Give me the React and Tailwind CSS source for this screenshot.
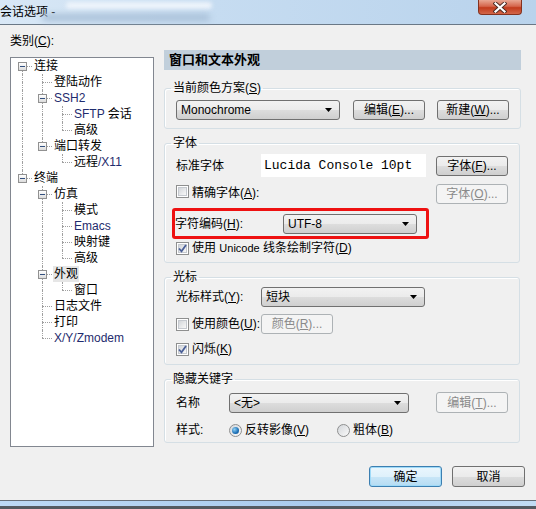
import React from "react";

const dot = "border-dotted border-[#a0a0a0]";

const tree = [
  {
    label: "连接",
    children: [
      { label: "登陆动作" },
      {
        label: "SSH2",
        en: true,
        children: [{ label: "SFTP", tail: " 会话", en: true }, { label: "高级" }],
      },
      { label: "端口转发", children: [{ label: "远程", tail: "/X11", enTail: true }] },
    ],
  },
  {
    label: "终端",
    children: [
      {
        label: "仿真",
        children: [
          { label: "模式" },
          { label: "Emacs", en: true },
          { label: "映射键" },
          { label: "高级" },
        ],
      },
      { label: "外观", selected: true, children: [{ label: "窗口" }] },
      { label: "日志文件" },
      { label: "打印" },
      { label: "X/Y/Zmodem", en: true },
    ],
  },
];

function flatten(nodes, depth, anc, out) {
  nodes.forEach((n, i) => {
    const hasNext = i < nodes.length - 1;
    const first = depth === 0 && i === 0;
    out.push({ ...n, depth, anc, hasNext, first });
    if (n.children) flatten(n.children, depth + 1, [...anc, hasNext], out);
  });
  return out;
}

function Box() {
  return (
    <div className="absolute left-[6px] top-[4px] w-[9px] h-[9px] border border-[#919191] bg-[linear-gradient(#ffffff,#dcdcdc)] flex items-center justify-center">
      <div className="w-[5px] h-[1px] bg-[#33507f]" />
    </div>
  );
}

function Cell({ up, down, right, box }) {
  return (
    <div className="relative w-[20px] h-[16px] shrink-0 flex flex-col">
      <div className={up ? `h-[8px] ml-[10px] border-l ${dot}` : "h-[8px] ml-[10px]"} />
      <div
        className={
          (down ? `border-l ${dot} ` : "") +
          (right ? `border-t ${dot} ` : "") +
          "h-[8px] ml-[10px]"
        }
      />
      {box && <Box />}
    </div>
  );
}

function TreeRow({ node }) {
  const cells = node.anc.map((cont, i) => <Cell key={i} up={cont} down={cont} />);
  return (
    <div className="flex h-[16px] items-center">
      {cells}
      <Cell up={!node.first} down={node.hasNext} right box={!!node.children} />
      <span
        className={
          (node.selected ? "bg-[#e6e6e6] " : "") +
          (node.en ? "text-[#1f2c6e] " : "text-black ") +
          "ml-[1px] px-[1px] leading-[16px] text-[12px] whitespace-nowrap"
        }
      >
        {node.label}
        {node.tail && (
          <span className={node.enTail ? "text-[#1f2c6e]" : "text-black"}>{node.tail}</span>
        )}
      </span>
    </div>
  );
}

function Arrow() {
  return (
    <svg width="7" height="4" viewBox="0 0 7 4" className="shrink-0">
      <path d="M0 0h7L3.5 4z" fill="#000" />
    </svg>
  );
}

function Combo({ value, className }) {
  return (
    <div
      className={
        "flex items-center h-[20px] border border-[#707070] rounded-[3px] bg-[linear-gradient(#f2f2f2,#ebebeb_50%,#dddddd_50%,#cfcfcf)] pl-[4px] pr-[7px] " +
        className
      }
    >
      <span className="flex-1 text-[12px] leading-[16px] whitespace-nowrap">{value}</span>
      <Arrow />
    </div>
  );
}

function Btn({ children, disabled, className }) {
  return (
    <div
      className={
        (disabled
          ? "border-[#adb2b5] bg-[#f4f4f4] text-[#8a8a8a] "
          : "border-[#707070] bg-[linear-gradient(#f2f2f2,#ebebeb_50%,#dddddd_50%,#cfcfcf)] text-black ") +
        "flex items-center justify-center w-[72px] h-[20px] border rounded-[3px] text-[12px] leading-[16px] whitespace-nowrap shrink-0 " +
        className
      }
    >
      {children}
    </div>
  );
}

function Check({ checked }) {
  return (
    <div className="relative w-[13px] h-[13px] border border-[#8e8f8f] bg-white p-[1px] shrink-0">
      <div className="w-full h-full border border-[#c5c9cf] bg-[linear-gradient(135deg,#d3d6da,#f8f8f8)]" />
      {checked && (
        <svg width="11" height="11" viewBox="0 0 11 11" className="absolute left-[0px] top-[0px]">
          <path d="M2 5.5l2.5 2.8L9 2" stroke="#4a5f97" strokeWidth="1.8" fill="none" />
        </svg>
      )}
    </div>
  );
}

function Radio({ checked }) {
  return (
    <div className="w-[13px] h-[13px] rounded-full border border-[#8e8f8f] bg-[linear-gradient(135deg,#d3d6da,#fafafa)] flex items-center justify-center shrink-0">
      {checked && (
        <div className="w-[7px] h-[7px] rounded-full bg-[radial-gradient(circle_at_35%_35%,#8fd0f5,#1c6fb5_60%,#124f8a)]" />
      )}
    </div>
  );
}

function Group({ title, className, children }) {
  return (
    <fieldset
      className={
        "border border-[#d5dfe5] rounded-[3px] px-[11px] shadow-[inset_1px_1px_0_#ffffff] " + className
      }
    >
      <legend className="ml-[-5px] px-[2px] text-[12px] leading-[16px]">{title}</legend>
      {children}
    </fieldset>
  );
}

export default function App() {
  const rows = flatten(tree, 0, [], []);
  return (
    <div className="w-[536px] h-[509px] flex flex-col overflow-hidden bg-[#f0f0f0] text-black font-['Liberation_Sans','Noto_Sans_CJK_SC',sans-serif]">
      {/* title bar */}
      <div className="relative h-[25px] shrink-0 border-b border-[#6a7886] bg-[linear-gradient(90deg,#d9e8f6,#c6dcf1_40%,#b9d3ec)] flex items-center">
        <span className="text-[12px] leading-[16px] pl-[0px] whitespace-nowrap">会话选项 -</span>
        <div className="absolute left-[66px] top-[2px] w-[146px] h-[7px] rounded-full bg-[#eef4fb] blur-[2px]" />
        <div className="absolute left-[42px] top-[14px] w-[168px] h-[7px] rounded-full bg-[#a9c0d8] blur-[3px]" />
        <div className="absolute left-[478px] top-[0px] w-[44px] h-[15px] rounded-b-[4px] border border-t-0 border-[#84321f] bg-[linear-gradient(#e9a793,#d5664c_45%,#c23b1c_55%,#d2674a)] flex items-center justify-center">
          <svg width="14" height="11" viewBox="0 0 14 11">
            <path d="M2.5 1.5l9 8M11.5 1.5l-9 8" stroke="#4a2a22" strokeWidth="4" strokeLinecap="square" />
            <path d="M2.5 1.5l9 8M11.5 1.5l-9 8" stroke="#ffffff" strokeWidth="2.2" strokeLinecap="square" />
          </svg>
        </div>
      </div>

      {/* body */}
      <div className="h-[475px] flex flex-col">
        <div className="flex">
          {/* left */}
          <div className="pl-[10px] pt-[8px] w-[164px] shrink-0">
            <div className="text-[12px] leading-[16px] h-[16px]">
              类别(<u>C</u>):
            </div>
            <div className="mt-[8px] w-[144px] h-[390px] border border-[#828790] bg-white pl-[1px] pt-[0px]">
              {rows.map((r, i) => (
                <TreeRow key={i} node={r} />
              ))}
            </div>
          </div>

          {/* right */}
          <div className="pt-[25px] w-[357px] flex flex-col">
            <div className="h-[20px] bg-[#c1cfdb] flex items-center pl-[5px] text-[13px] font-bold leading-[16px]">
              窗口和文本外观
            </div>

            <Group
              title={<>当前颜色方案(<u>S</u>)</>}
              className="mt-[10px] pt-[4px] pb-[8px] w-[356px]"
            >
              <div className="flex items-center gap-[12px]">
                <Combo value="Monochrome" className="w-[164px] mr-[1px]" />
                <Btn>
                  编辑(<u>E</u>)...
                </Btn>
                <Btn>
                  新建(<u>W</u>)...
                </Btn>
              </div>
            </Group>

            <Group title="字体" className="mt-[6px] pt-[3px] pb-[6px] w-[356px]">
              <div className="flex items-center h-[23px]">
                <span className="w-[85px] text-[12px] leading-[16px]">标准字体</span>
                <div className="w-[165px] h-[23px] bg-white flex items-center pl-[3px] text-[13px] font-['Liberation_Mono',monospace] whitespace-nowrap">
                  Lucida Console 10pt
                </div>
                <Btn className="ml-auto">
                  字体(<u>F</u>)...
                </Btn>
              </div>
              <div className="flex mt-[7px] h-[20px]">
                <div className="flex items-center gap-[3px] h-[14px]">
                  <Check />
                  <span className="text-[12px] leading-[16px] mt-[3px]">
                    精确字体(<u>A</u>):
                  </span>
                </div>
                <Btn disabled className="ml-auto">
                  字体(<u>O</u>)...
                </Btn>
              </div>
              <div className="ml-[-4px] mt-[4px] w-[257px] h-[31px] border-[3px] border-[#ee1111] rounded-[3px] flex items-center">
                <span className="w-[108px] shrink-0 text-[12px] leading-[16px]">
                  字符编码(<u>H</u>):
                </span>
                <Combo value="UTF-8" className="w-[134px]" />
              </div>
              <div className="flex items-center gap-[3px] h-[16px] mt-[1px]">
                <Check checked />
                <span className="text-[12px] leading-[16px] whitespace-nowrap">
                  使用 <span className="text-[11px]">Unicode</span> 线条绘制字符(<u>D</u>)
                </span>
              </div>
            </Group>

            <Group title="光标" className="mt-[6px] pt-[2px] pb-[7px] w-[356px]">
              <div className="flex items-center h-[20px]">
                <span className="w-[85px] text-[12px] leading-[16px]">
                  光标样式(<u>Y</u>):
                </span>
                <Combo value="短块" className="w-[164px]" />
              </div>
              <div className="flex items-center h-[20px] mt-[7px]">
                <div className="w-[85px] flex items-center gap-[3px]">
                  <Check />
                  <span className="text-[12px] leading-[16px] whitespace-nowrap">
                    使用颜色(<u>U</u>):
                  </span>
                </div>
                <Btn disabled>
                  颜色(<u>R</u>)...
                </Btn>
              </div>
              <div className="flex items-center gap-[3px] h-[16px] mt-[7px]">
                <Check checked />
                <span className="text-[12px] leading-[16px]">
                  闪烁(<u>K</u>)
                </span>
              </div>
            </Group>

            <Group title="隐藏关键字" className="mt-[6px] pt-[5px] pb-[4px] w-[356px]">
              <div className="flex items-center h-[21px]">
                <span className="w-[53px] text-[12px] leading-[16px]">名称</span>
                <Combo value="<无>" className="w-[180px]" />
                <Btn disabled className="ml-auto h-[21px]">
                  编辑(<u>T</u>)...
                </Btn>
              </div>
              <div className="flex items-center h-[16px] mt-[9px]">
                <span className="w-[53px] text-[12px] leading-[16px]">样式:</span>
                <div className="w-[108px] flex items-center gap-[3px]">
                  <Radio checked />
                  <span className="text-[12px] leading-[16px] whitespace-nowrap">
                    反转影像(<u>V</u>)
                  </span>
                </div>
                <div className="flex items-center gap-[3px]">
                  <Radio />
                  <span className="text-[12px] leading-[16px]">
                    粗体(<u>B</u>)
                  </span>
                </div>
              </div>
            </Group>
          </div>
        </div>

        {/* buttons */}
        <div className="flex justify-end gap-[10px] pr-[11px] mt-[19px]">
          <div className="w-[73px] h-[21px] rounded-[3px] border border-[#3c7fb1] shadow-[inset_0_0_0_1px_#9fdaf8] bg-[linear-gradient(#eaf6fd,#dff1fb_50%,#c9e6f7_50%,#b5dcf3)] flex items-center justify-center text-[12px] leading-[16px]">
            确定
          </div>
          <div className="w-[73px] h-[21px] rounded-[3px] border border-[#707070] bg-[linear-gradient(#f2f2f2,#ebebeb_50%,#dddddd_50%,#cfcfcf)] flex items-center justify-center text-[12px] leading-[16px]">
            取消
          </div>
        </div>
      </div>

      {/* bottom frame */}
      <div className="h-[9px] shrink-0 flex flex-col">
        <div className="h-[1px] bg-[#656e78]" />
        <div className="h-[5px] bg-[linear-gradient(90deg,#bcd9f5,#a9cbee_60%,#c2dcf4)]" />
        <div className="h-[3px] bg-[#545a61]" />
      </div>
    </div>
  );
}
